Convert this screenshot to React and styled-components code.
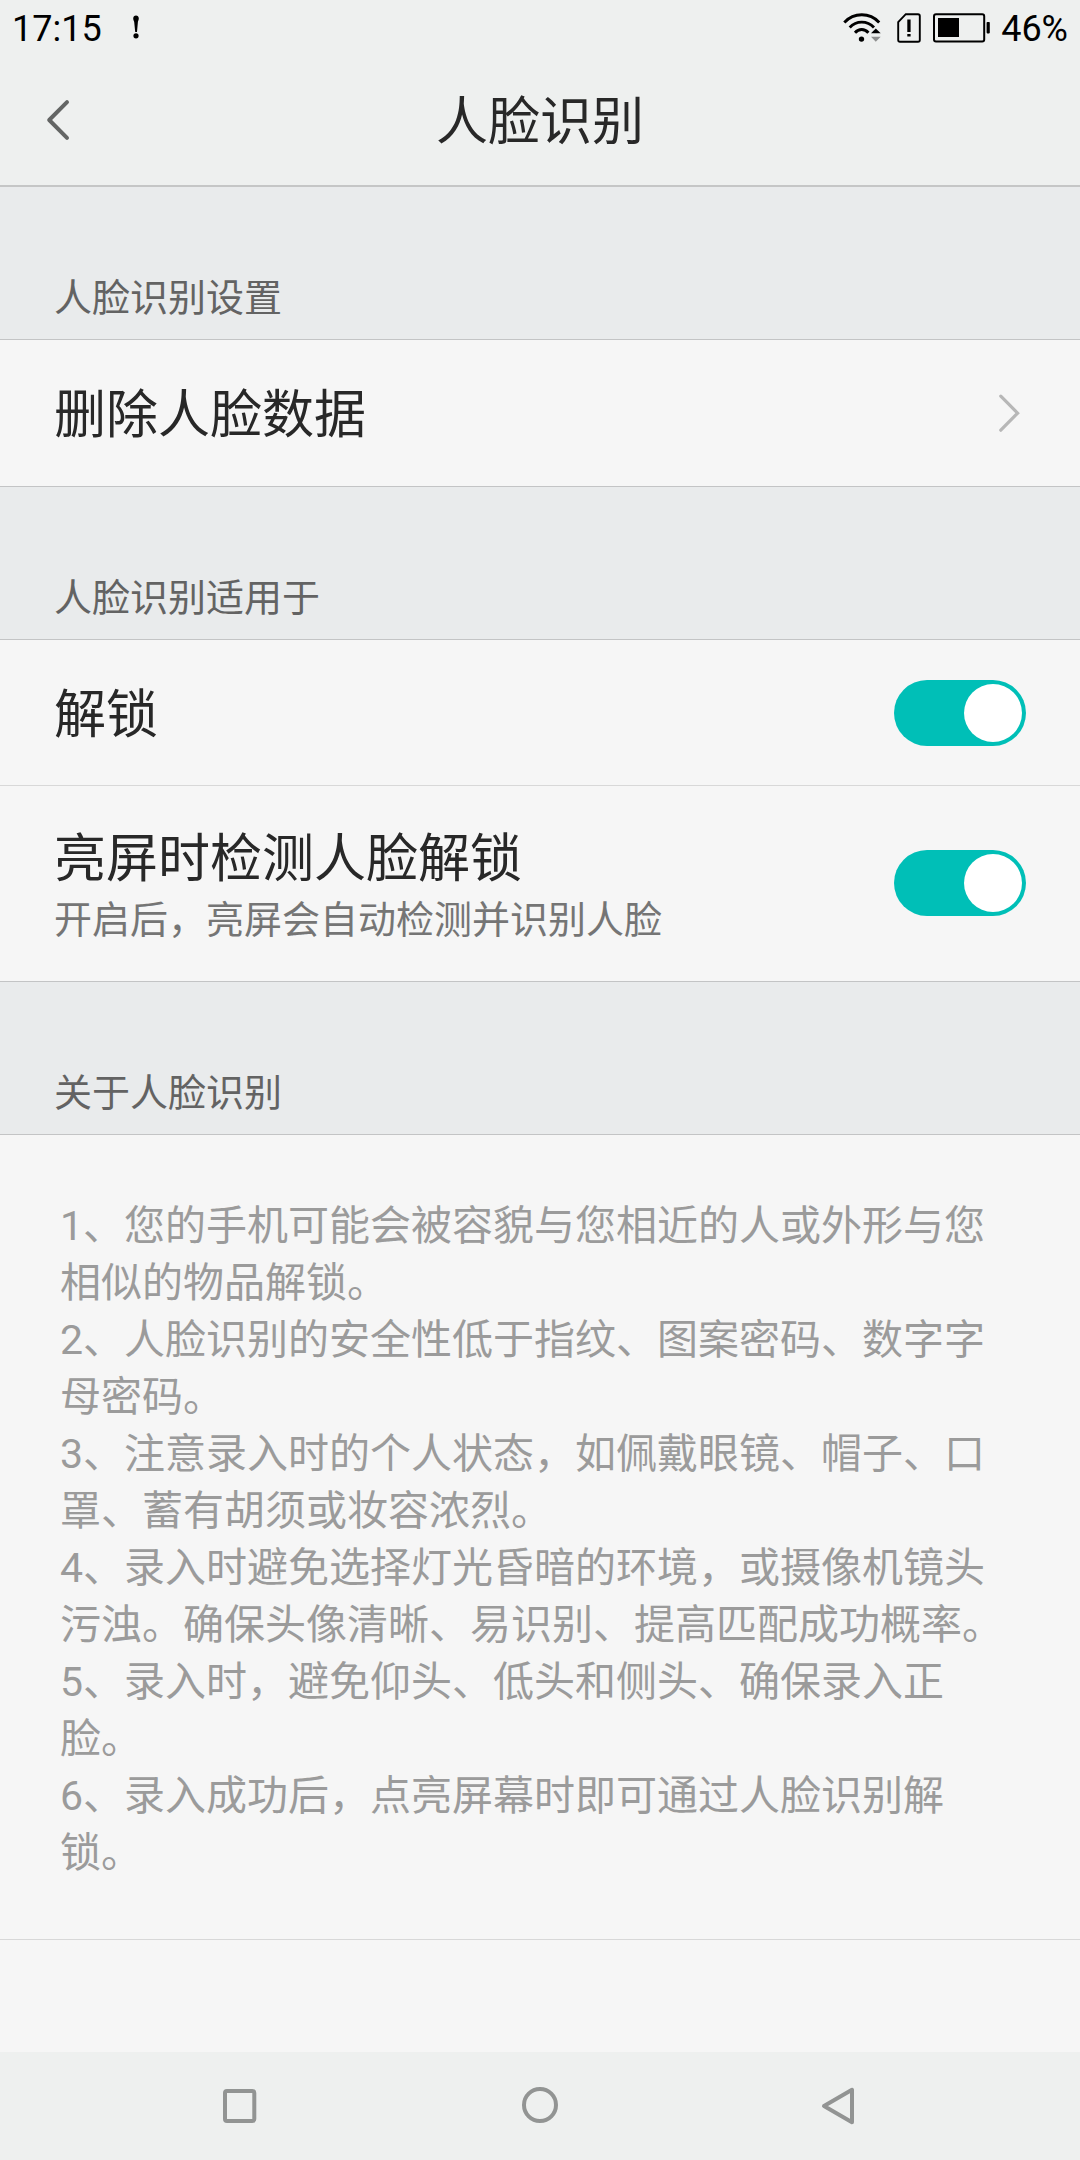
import { useState } from "react"
import styled, { createGlobalStyle } from "styled-components"

const notes = [
    "1、您的手机可能会被容貌与您相近的人或外形与您相似的物品解锁。",
    "2、人脸识别的安全性低于指纹、图案密码、数字字母密码。",
    "3、注意录入时的个人状态，如佩戴眼镜、帽子、口罩、蓄有胡须或妆容浓烈。",
    "4、录入时避免选择灯光昏暗的环境，或摄像机镜头污浊。确保头像清晰、易识别、提高匹配成功概率。",
    "5、录入时，避免仰头、低头和侧头、确保录入正脸。",
    "6、录入成功后，点亮屏幕时即可通过人脸识别解锁。",
];

const App = () => {
    const [unlock, setUnlock] = useState(true);
    const [detect, setDetect] = useState(true);

    return (
        <Container>
            <GlobalStyle />
            <StatusBar>
                <Clock>17:15</Clock>
                <AlertIcon />
                <StatusIcons>
                    <WifiIcon />
                    <SimIcon />
                    <BatteryIcon />
                </StatusIcons>
                <Battery>46%</Battery>
            </StatusBar>
            <Header>
                <BackButton aria-label="返回">
                    <svg width="24" height="42" viewBox="0 0 24 42">
                        <path d="M21 3.2 3.2 21 21 38.8" fill="none" stroke="#636564" strokeWidth="4" strokeLinecap="round" strokeLinejoin="round" />
                    </svg>
                </BackButton>
                <Title>人脸识别</Title>
            </Header>

            <SectionLabel>人脸识别设置</SectionLabel>
            <Row>
                <RowTitle>删除人脸数据</RowTitle>
                <Arrow width="22" height="40" viewBox="0 0 22 40">
                    <path d="M2.8 3.2 19.6 20.2 2.8 37.2" fill="none" stroke="#b7b7b7" strokeWidth="3.2" strokeLinecap="round" />
                </Arrow>
            </Row>

            <SectionLabel>人脸识别适用于</SectionLabel>
            <Row $light>
                <RowTitle>解锁</RowTitle>
                <Toggle role="switch" aria-checked={unlock} $on={unlock} onClick={() => setUnlock(!unlock)}>
                    <Knob />
                </Toggle>
            </Row>
            <Row $height="196px">
                <RowText>
                    <RowTitle>亮屏时检测人脸解锁</RowTitle>
                    <RowHint>开启后，亮屏会自动检测并识别人脸</RowHint>
                </RowText>
                <Toggle role="switch" aria-checked={detect} $on={detect} $raised onClick={() => setDetect(!detect)}>
                    <Knob />
                </Toggle>
            </Row>

            <SectionLabel>关于人脸识别</SectionLabel>
            <Notes>
                {notes.map((note) => <Note key={note}>{note}</Note>)}
            </Notes>
            <Filler />

            <NavBar>
                <NavIcon>
                    <rect x="5" y="6" width="29.3" height="30" rx="2" />
                </NavIcon>
                <NavIcon>
                    <circle cx="20" cy="20" r="16" />
                </NavIcon>
                <NavIcon>
                    <path d="M32 4.8V37.2L4 21Z" />
                </NavIcon>
            </NavBar>
        </Container>
    )
};

const AlertIcon = () => (
    <Alert width="8" height="24" viewBox="0 0 8 24">
        <path d="M4 0.5C5.6 0.5 6.8 1.8 6.8 3.4C6.8 5 6 5.6 5.9 7L5 17H3.2L2.2 7C2 5.6 1.2 5 1.2 3.4C1.2 1.8 2.4 0.5 4 0.5Z" />
        <circle cx="4" cy="20.8" r="2.6" />
    </Alert>
);

const WifiIcon = () => (
    <Wifi width="38" height="32" viewBox="0 0 38 32">
        <g fill="none" stroke="#000" strokeWidth="2.9">
            <path d="M1.3 10.4C11 0.2 26.6 0.2 36.2 10.4" />
            <path d="M6.7 15.4C13.3 8.3 24.2 8.3 31 15.4" />
            <path d="M12 20.7C15.8 16.4 21.6 16.4 25.4 20.7" />
        </g>
        <circle cx="18.5" cy="27.1" r="2.7" />
        <path d="M28 21.2 32.8 16.4 37.7 21.2Z" />
        <path d="M28 24.8H37.7L32.8 29.8Z" fill="#8e8f8f" />
    </Wifi>
);

const SimIcon = () => (
    <svg width="24" height="30" viewBox="0 0 24 30">
        <path d="M8.8 1.2H21Q22.8 1.2 22.8 3V27Q22.8 28.8 21 28.8H3Q1.2 28.8 1.2 27V9.2Z" fill="none" stroke="#000" strokeWidth="1.9" />
        <path d="M10.3 6.6H13.6V19H10.3ZM10.3 21H13.6V23.6H10.3Z" />
    </svg>
);

const BatteryIcon = () => (
    <svg width="57" height="30" viewBox="0 0 57 30">
        <rect x="1" y="1.2" width="50.2" height="27.3" rx="2" fill="none" stroke="#000" strokeWidth="2" />
        <rect x="5" y="5" width="21" height="19" />
        <rect x="53.6" y="9" width="3.2" height="11.4" rx="0.8" />
    </svg>
);

const GlobalStyle = createGlobalStyle`
    body {
        margin: 0;
        background: #f6f6f6;
        font-family: Roboto, "Noto Sans CJK SC", sans-serif;
    }
`;

const Container = styled.main`
    display: flex;
    flex-direction: column;
    width: 1080px;
    height: 2160px;
    overflow: hidden;
    background: #f6f6f6;
    color: #282828;
    text-spacing-trim: space-all;
`;

const StatusBar = styled.div`
    display: flex;
    align-items: center;
    height: 56px;
    flex-shrink: 0;
    padding: 0 12px 0 12px;
    box-sizing: border-box;
    background: #eef0ef;
    color: #000;
    font-size: 36px;
    line-height: 54px;
`;

const Clock = styled.span`
    width: 120px;
    padding-top: 2px;
`;

const Alert = styled.svg`
    margin-bottom: 3px;
`;

const StatusIcons = styled.div`
    display: flex;
    align-items: center;
    gap: 12px;
    margin-left: auto;
    margin-right: 11px;
    padding-bottom: 1px;
`;

const Wifi = styled.svg`
    margin-right: 4px;
`;

const Battery = styled.span`
    padding-top: 2px;
`;

const Header = styled.header`
    display: grid;
    grid-template-columns: 120px 1fr 120px;
    align-items: center;
    height: 131px;
    flex-shrink: 0;
    box-sizing: border-box;
    background: #eef0ef;
    border-bottom: 2px solid #c5c6c6;
`;

const BackButton = styled.button`
    display: flex;
    padding: 0 0 1px 46px;
    border: 0;
    background: none;
`;

const Title = styled.h1`
    margin: 0;
    padding-top: 4px;
    font-size: 52px;
    font-weight: 400;
    line-height: 76px;
    text-align: center;
`;

const SectionLabel = styled.h2`
    display: flex;
    align-items: flex-end;
    height: 153px;
    flex-shrink: 0;
    margin: 0;
    padding: 0 54px 13px;
    box-sizing: border-box;
    background: #e9ebec;
    border-bottom: 1px solid #c3c4c5;
    color: #636363;
    font-size: 38px;
    font-weight: 400;
    line-height: 56px;
`;

const Row = styled.div`
    display: flex;
    align-items: center;
    justify-content: space-between;
    height: ${(props) => props.$height || (props.$light ? "146px" : "147px")};
    flex-shrink: 0;
    padding: 0 54px;
    box-sizing: border-box;
    border-bottom: 1px solid ${(props) => (props.$light ? "#d8d8d8" : "#c3c4c5")};
`;

const RowText = styled.div`
    display: flex;
    flex-direction: column;
    padding-bottom: 2px;
`;

const RowTitle = styled.span`
    padding-top: 6px;
    font-size: 52px;
    line-height: 68px;
`;

const RowHint = styled.span`
    color: #757575;
    font-size: 38px;
    line-height: 52px;
`;

const Arrow = styled.svg`
    margin: 0 6px 1px 0;
`;

const Toggle = styled.button`
    display: flex;
    justify-content: ${(props) => (props.$on ? "flex-end" : "flex-start")};
    width: 132px;
    height: 66px;
    margin-bottom: ${(props) => (props.$raised ? "1px" : "0")};
    padding: 4px;
    border: 0;
    border-radius: 33px;
    background: ${(props) => (props.$on ? "#00bfb7" : "#cccccc")};
`;

const Knob = styled.span`
    width: 58px;
    height: 58px;
    border-radius: 50%;
    background: #fff;
`;

const Notes = styled.section`
    height: 805px;
    flex-shrink: 0;
    padding: 63px 60px 0;
    box-sizing: border-box;
    border-bottom: 1px solid #d8d8d8;
    color: #9b9b9b;
    font-size: 41px;
    line-height: 57px;
`;

const Note = styled.p`
    margin: 0;
`;

const Filler = styled.div`
    flex: 1;
`;

const NavBar = styled.nav`
    display: flex;
    align-items: center;
    justify-content: space-between;
    height: 108px;
    flex-shrink: 0;
    padding: 0 220px;
    box-sizing: border-box;
    background: #eef0ef;
`;

const NavIcon = styled.svg.attrs({ width: 40, height: 42, viewBox: "0 0 40 42" })`
    fill: none;
    stroke: #929493;
    stroke-width: 4;
    stroke-linejoin: round;
`;

export default App;
